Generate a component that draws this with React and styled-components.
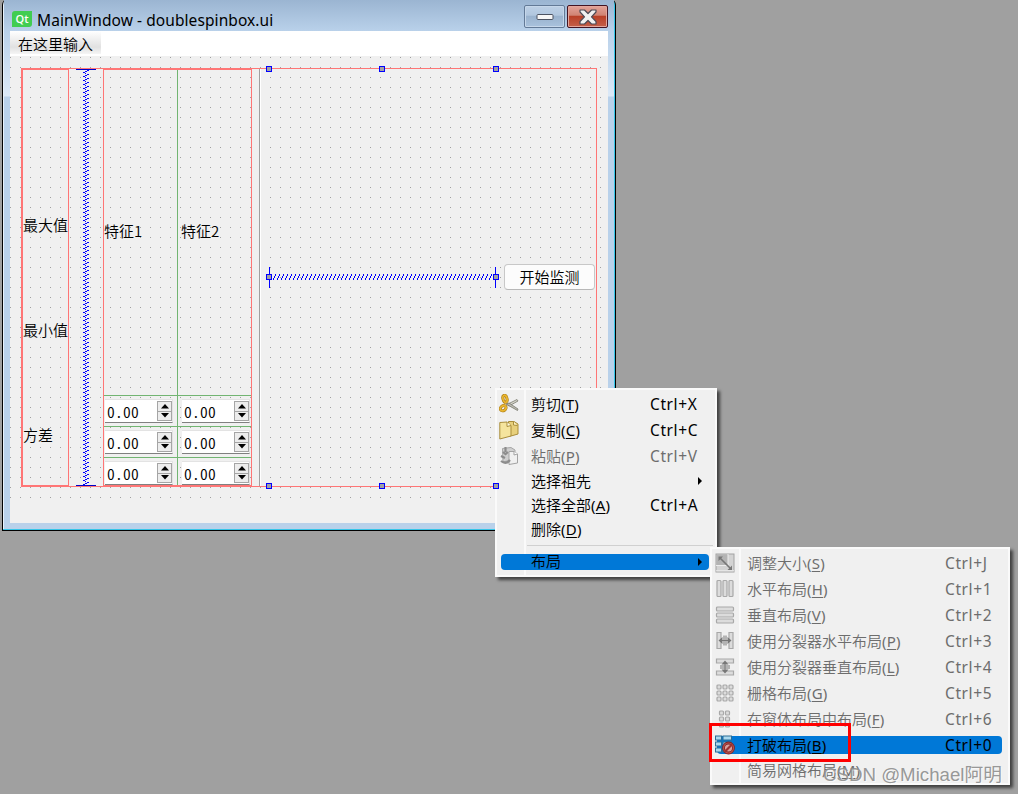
import styled, { createGlobalStyle } from 'styled-components';

const uiFont = '"Noto Sans", "Noto Sans CJK SC", sans-serif';
const formFont = '"Noto Sans CJK SC", sans-serif';

const editItems = [
    { label: '剪切', mark: 'T', keys: 'Ctrl+X', icon: 'cut' },
    { label: '复制', mark: 'C', keys: 'Ctrl+C', icon: 'copy' },
    { label: '粘贴', mark: 'P', keys: 'Ctrl+V', icon: 'paste', disabled: true },
    { label: '选择祖先', height: 24, arrow: true },
    { label: '选择全部', mark: 'A', keys: 'Ctrl+A', height: 24 },
    { label: '删除', mark: 'D', height: 24 },
];

const layoutItems = [
    { label: '调整大小', mark: 'S', keys: 'Ctrl+J', icon: 'resize', disabled: true },
    { label: '水平布局', mark: 'H', keys: 'Ctrl+1', icon: 'horizontal', disabled: true },
    { label: '垂直布局', mark: 'V', keys: 'Ctrl+2', icon: 'vertical', disabled: true },
    { label: '使用分裂器水平布局', mark: 'P', keys: 'Ctrl+3', icon: 'splitH', disabled: true },
    { label: '使用分裂器垂直布局', mark: 'L', keys: 'Ctrl+4', icon: 'splitV', disabled: true },
    { label: '栅格布局', mark: 'G', keys: 'Ctrl+5', icon: 'grid', disabled: true },
    { label: '在窗体布局中布局', mark: 'F', keys: 'Ctrl+6', icon: 'form', disabled: true },
    { label: '打破布局', mark: 'B', keys: 'Ctrl+0', icon: 'breakLayout', active: true },
    { label: '简易网格布局', mark: 'M', disabled: true, height: 24 },
];

const bar = { fill: '#dcdcdc', stroke: '#a8a8a8', strokeWidth: 1.2 };

const icons = {
    cut: (
        <>
            <path d="M8 10.5L18 5.5L19 7L10 12Z" fill="#d6d6cc" stroke="#77776c" strokeWidth=".8" />
            <path d="M7 10L10 9L19 15L18.5 16.5Z" fill="#bcbcb2" stroke="#77776c" strokeWidth=".8" />
            <ellipse cx="6" cy="4.8" rx="2" ry="3.6" transform="rotate(-15 6 4.8)" fill="none" stroke="#a97b13" strokeWidth="3" />
            <ellipse cx="6" cy="4.8" rx="2" ry="3.6" transform="rotate(-15 6 4.8)" fill="none" stroke="#e9b52f" strokeWidth="1.8" />
            <ellipse cx="4.2" cy="14.2" rx="3" ry="2.4" transform="rotate(-35 4.2 14.2)" fill="none" stroke="#a97b13" strokeWidth="3" />
            <ellipse cx="4.2" cy="14.2" rx="3" ry="2.4" transform="rotate(-35 4.2 14.2)" fill="none" stroke="#e9b52f" strokeWidth="1.8" />
        </>
    ),
    copy: (
        <>
            <path d="M9.5 1.5H15L19 4V14L12 16H9.5Z" fill="#e7cf7b" stroke="#a98d3b" />
            <path d="M14.5 1.5V5L18.5 5.5" fill="#fff5c8" stroke="#a98d3b" />
            <path d="M.8 2.5L8 2L12 5.5V16L.8 19Z" fill="#f5e49d" stroke="#a98d3b" />
            <path d="M8 2V6.5L12 5.5" fill="#fffbe0" stroke="#a98d3b" />
        </>
    ),
    paste: (
        <>
            <path d="M3.5 2.5L12 1.5L16 4V13L4 16Z" fill="#cfcfcf" stroke="#a6a6a6" />
            <path d="M10 5.5H15L18.5 8V17L10 18.5Z" fill="#f0f0f0" stroke="#a3a3a3" />
            <path d="M15 5.5V9L18.5 8" fill="#fff" stroke="#a3a3a3" />
            <path d="M6.5 1V6M4 6L6.5 8L9 6M2 10L6 12M2 15Q7 19 11 14" fill="none" stroke="#8c8c8c" strokeWidth="2.2" />
        </>
    ),
    resize: (
        <>
            <rect x="1" y="1" width="18" height="18" fill="#d3d3d3" stroke="#a2a2a2" />
            <rect x="1.5" y="1.5" width="11.5" height="10.5" fill="#b4b4b4" />
            <path d="M1 12.5H13V1M1 17.8H19" stroke="#ededed" fill="none" />
            <path d="M5 5L15 15" stroke="#777" strokeWidth="1.6" />
            <path d="M3.5 3.5H8L3.5 8ZM17 17H12.5L17 12.5Z" fill="#777" />
        </>
    ),
    horizontal: [2, 8, 14].map((x) => <rect key={x} x={x} y="1.5" width="4" height="16" rx="1" {...bar} />),
    vertical: [2, 8, 14].map((y) => <rect key={y} x="1.5" y={y} width="17" height="4" rx="1" {...bar} />),
    splitH: (
        <>
            <path d="M2 1.5H6V17.5H2ZM14 1.5H18V17.5H14Z" {...bar} />
            <path d="M9 4.5V14.5M11 4.5V14.5M5 9.5H15" stroke="#777" strokeWidth="1" />
            <path d="M3.5 9.5L7.5 6V13ZM16.5 9.5L12.5 6V13Z" fill="#777" />
        </>
    ),
    splitV: (
        <>
            <path d="M1.5 2H18.5V6H1.5ZM1.5 14H18.5V18H1.5Z" {...bar} />
            <path d="M5 9H15M5 11H15M10 5V15" stroke="#777" strokeWidth="1" />
            <path d="M10 3.5L13.5 7.5H6.5ZM10 16.5L13.5 12.5H6.5Z" fill="#777" />
        </>
    ),
    grid: [2, 8, 14].flatMap((y) =>
        [2, 8, 14].map((x) => <rect key={`${x}-${y}`} x={x} y={y} width="4" height="4" rx="1" {...bar} />)
    ),
    form: [2, 8, 14].flatMap((y) =>
        [4.5, 10.5].map((x) => <rect key={`${x}-${y}`} x={x} y={y} width="4" height="4" rx="1" {...bar} />)
    ),
    breakLayout: (
        <>
            {[1, 7, 13].map((y) => (
                <g key={y} fill="#a9d8ee" stroke="#2d6c94">
                    <rect x=".5" y={y} width="6" height="4" />
                    <rect x="8" y={y} width="8.5" height="4" />
                </g>
            ))}
            <circle cx="13.5" cy="13" r="5" fill="#d9a09c" stroke="#7d2426" strokeWidth="2.8" />
            <circle cx="13.5" cy="13" r="5" fill="none" stroke="#b5504c" strokeWidth="1.2" />
            <path d="M9.8 16.7L17.2 9.3" stroke="#9c3030" strokeWidth="2.2" />
        </>
    ),
};

const Item = ({ label, mark, keys, icon, disabled, active, arrow, height = 26 }) => (
    <MenuRow $height={height} $disabled={disabled}>
        {active && <Highlight />}
        <IconCell>
            {icon && (
                <svg width="20" height="20" viewBox="0 0 20 20">
                    {icons[icon]}
                </svg>
            )}
        </IconCell>
        <ItemLabel>
            {label}
            {mark && <Mark>(<u>{mark}</u>)</Mark>}
        </ItemLabel>
        {keys && <Keys>{keys}</Keys>}
        {arrow && <Arrow />}
    </MenuRow>
);

const Arrow = () => (
    <ArrowIcon width="4" height="8" viewBox="0 0 4 8">
        <path d="M0 0L4 4L0 8Z" fill="#000" />
    </ArrowIcon>
);

const Spin = () => (
    <SpinBox>
        <SpinValue>0.00</SpinValue>
        <SpinButtons>
            <SpinButton>
                <svg width="8" height="5" viewBox="0 0 8 5"><path d="M4 0L8 4.5H0Z" /></svg>
            </SpinButton>
            <SpinButton>
                <svg width="8" height="5" viewBox="0 0 8 5"><path d="M4 4.5L8 0H0Z" /></svg>
            </SpinButton>
        </SpinButtons>
    </SpinBox>
);

const VerticalSpacer = () => (
    <svg width="20" height="417" viewBox="0 0 20 417" shapeRendering="crispEdges">
        <defs>
            <pattern id="coilV" x="7" y="0" width="6" height="4" patternUnits="userSpaceOnUse">
                <path d="M4 1h2v1h-2zM2 2h2v1h-2zM0 3h2v1h-2zM2 0h1v1h-1z" fill="#0000ff" />
            </pattern>
        </defs>
        <rect x="7" y="1" width="6" height="415" fill="url(#coilV)" />
        <path d="M0 0h20v1H0zM0 416h20v1H0z" fill="#0000c8" />
    </svg>
);

const HorizontalSpacer = () => (
    <svg width="227" height="21" viewBox="0 0 227 21" shapeRendering="crispEdges">
        <defs>
            <pattern id="coilH" x="0" y="7" width="4" height="6" patternUnits="userSpaceOnUse">
                <path d="M2 0h1v2h-1zM1 2h1v2h-1zM0 4h1v2h-1z" fill="#0000ff" />
            </pattern>
        </defs>
        <rect x="1" y="7" width="225" height="6" fill="url(#coilH)" />
        <path d="M0 0h1v21H0zM226 0h1v21h-1z" fill="#0000ff" />
    </svg>
);

const handles = [
    [256, 10], [369, 10], [483, 10],
    [256, 218], [483, 218],
    [256, 427], [369, 427], [483, 427],
];

const App = () => (
    <Desktop>
        <GlobalStyle />
        <Window>
            <TitleBar>
                <QtLogo>Qt</QtLogo>
                <Title>MainWindow - doublespinbox.ui</Title>
                <WinButton>
                    <svg width="18" height="8" viewBox="0 0 18 8">
                        <rect x="1" y="1.5" width="16" height="5" rx="1" fill="#f6f6f6" stroke="#4c5362" />
                    </svg>
                </WinButton>
                <WinButton $close>
                    <svg width="20" height="16" viewBox="0 0 20 16">
                        <path
                            d="M2 1H6.5L10 4.5L13.5 1H18V3L13.5 7.8L18 12.5V15H13.5L10 11.5L6.5 15H2V12.5L6.5 7.8L2 3Z"
                            fill="#f1f1f1"
                            stroke="#4d4a55"
                            strokeWidth="1.2"
                            strokeLinejoin="round"
                        />
                    </svg>
                </WinButton>
            </TitleBar>
            <MenuBar>
                <MenuHint>在这里输入</MenuHint>
            </MenuBar>
            <Canvas>
                <FormLayout>
                    <LabelColumn>
                        <RowLabel>最大值</RowLabel>
                        <RowLabel>最小值</RowLabel>
                        <RowLabel>方差</RowLabel>
                    </LabelColumn>
                    <SpacerColumn>
                        <VerticalSpacer />
                    </SpacerColumn>
                    <FeatureGrid>
                        <Cell>特征1</Cell>
                        <Cell $right>特征2</Cell>
                        {[0, 1, 2].map((row) => [
                            <SpinCell key={`l${row}`}><Spin /></SpinCell>,
                            <SpinCell key={`r${row}`} $right><Spin /></SpinCell>,
                        ])}
                    </FeatureGrid>
                    <Divider />
                    <ActionRow>
                        <HorizontalSpacer />
                        <StartButton>开始监测</StartButton>
                    </ActionRow>
                </FormLayout>
                {handles.map(([x, y]) => (
                    <Handle key={`${x}-${y}`} $x={x} $y={y} />
                ))}
            </Canvas>
        </Window>

        <EditMenu>
            {editItems.map((item) => (
                <Item key={item.label} {...item} />
            ))}
            <Separator />
            <SubmenuRow>
                <span>布局</span>
                <Arrow />
            </SubmenuRow>
        </EditMenu>

        <LayoutMenu>
            {layoutItems.map((item) => (
                <Item key={item.label} {...item} />
            ))}
        </LayoutMenu>

        <RedFrame />
        <Watermark>CSDN @Michael阿明</Watermark>
    </Desktop>
);

export default App;

const GlobalStyle = createGlobalStyle`
    * {
        box-sizing: border-box;
    }
    body {
        margin: 0;
        background: #a0a0a0;
    }
    svg {
        display: block;
        flex: none;
    }
`;

const Desktop = styled.div`
    position: relative;
    width: 1018px;
    height: 794px;
    overflow: hidden;
    background: #a0a0a0;
    font-family: ${uiFont};
    font-size: 15px;
    font-weight: 350;
    color: #000;
`;

const Window = styled.div`
    position: absolute;
    left: 2px;
    top: -1px;
    width: 614px;
    height: 532px;
    padding: 0 7px 7px 7px;
    border: 1px solid #000;
    border-top: none;
    border-radius: 6px 6px 0 0;
    background:
        linear-gradient(#35c5e8, #35c5e8) right top / 1px 100% no-repeat,
        linear-gradient(#35c5e8, #35c5e8) left bottom / 100% 1px no-repeat,
        linear-gradient(#e8f2fb, #e8f2fb) left top / 1px 100% no-repeat,
        linear-gradient(#9ab4d1 0, #b9d1ea 32px, #dce9f7 97px, #b9d1ea 98px);
    display: flex;
    flex-direction: column;
`;

const TitleBar = styled.div`
    height: 32px;
    margin: 0 -6px;
    padding: 6px 6px 0 8px;
    flex: none;
    display: flex;
    align-items: flex-start;
    background: linear-gradient(#9ab4d1, #b9d1ea);
`;

const QtLogo = styled.div`
    width: 20px;
    height: 16px;
    margin-top: 6px;
    border-radius: 3px 0 3px 0;
    background: #41cd52;
    color: #fff;
    font: 600 11px/15px "Open Sans", sans-serif;
    text-align: center;
`;

const Title = styled.div`
    flex: 1;
    margin: 3px 0 0 5px;
    line-height: 24px;
    font-size: 15.5px;
    font-weight: 400;
    letter-spacing: 0.08px;
    white-space: nowrap;
`;

const WinButton = styled.div`
    width: 41px;
    height: 23px;
    margin-left: 2px;
    border: 1px solid ${({ $close }) => ($close ? '#431422' : '#637a97')};
    border-radius: 2px;
    box-shadow: inset 0 0 0 1px ${({ $close }) => ($close ? '#e3a69c' : '#c6d7ea')};
    background: ${({ $close }) =>
        $close
            ? 'linear-gradient(#e3a399 0, #d08372 45%, #b83e25 46%, #c4604a 100%)'
            : 'linear-gradient(#bdd0e6 0, #b0c6de 45%, #98b1cd 46%, #a9c2dd 100%)'};
    display: flex;
    align-items: center;
    justify-content: center;
`;

const MenuBar = styled.div`
    height: 25px;
    flex: none;
    background: #fff;
`;

const MenuHint = styled.div`
    width: 91px;
    height: 23px;
    padding-left: 8px;
    line-height: 26px;
    background: linear-gradient(#fff, #e1e1e1 70%, #f5f5f5);
`;

/* design surface with one grid dot every 10px */
const Canvas = styled.div`
    position: relative;
    flex: 1;
    padding: 12px 11px;
    background: conic-gradient(at 1px 1px, #f0f0f0 75%, #a0a0a0 0) 0 1px / 10px 10px;
    font-family: ${formFont};
    font-weight: 350;

    &::after {
        content: '';
        position: absolute;
        left: 0;
        right: 0;
        bottom: 0;
        height: 24px;
        background: #f0f0f0;
    }
`;

const FormLayout = styled.div`
    width: 576px;
    height: 419px;
    border: 1px solid #ff7676;
    display: flex;
`;

const LabelColumn = styled.div`
    width: 47px;
    border: 1px solid #ff7676;
    padding-top: 102px;
`;

const RowLabel = styled.div`
    height: 105px;
    line-height: 105px;
    white-space: nowrap;
`;

const SpacerColumn = styled.div`
    width: 34px;
    padding-left: 7px;
`;

const FeatureGrid = styled.div`
    width: 149px;
    border: 1px solid #ff7676;
    display: grid;
    grid-template-columns: 74px 73px;
    grid-template-rows: 325px 31px 31px 28px;
`;

const Cell = styled.div`
    padding-left: ${({ $right }) => ($right ? '3px' : '0')};
    border-right: ${({ $right }) => ($right ? 'none' : '1px solid #72b572')};
    line-height: 321px;
`;

const SpinCell = styled(Cell)`
    padding-top: 3px;
    padding-left: ${({ $right }) => ($right ? '4px' : '1px')};
    border-top: 1px solid #72b572;
    line-height: 1;
`;

const SpinBox = styled.div`
    width: 68px;
    height: 24px;
    padding: 1px 0 1px 2px;
    background: #fff;
    border-top: 1px solid #e3e3e3;
    border-bottom: 1px solid #808080;
    border-right: 1px solid #e3e3e3;
    display: flex;
    justify-content: space-between;
`;

const SpinValue = styled.span`
    font-size: 15.5px;
    line-height: 20px;
    font-feature-settings: 'hwid';
    letter-spacing: 0.25px;
`;

const SpinButtons = styled.div`
    width: 15px;
    height: 20px;
    border: 1px solid #a5a5a5;
    display: flex;
    flex-direction: column;
`;

const SpinButton = styled.div`
    flex: 1;
    background: #ededed;
    display: flex;
    align-items: center;
    justify-content: center;
    & + & {
        border-top: 1px solid #a5a5a5;
    }
`;

const Divider = styled.div`
    width: 2px;
    margin-left: 7px;
    border-left: 1px solid #a0a0a0;
    background: #fff;
`;

const ActionRow = styled.div`
    display: flex;
    align-items: center;
    padding-left: 8px;
`;

const StartButton = styled.div`
    width: 91px;
    height: 26px;
    margin: -1px 0 0 8px;
    border: 1px solid #c8c8c8;
    border-bottom-color: #b8b8b8;
    border-radius: 4px;
    background: #fcfcfc;
    line-height: 23px;
    text-align: center;
`;

const Handle = styled.div`
    position: absolute;
    left: ${({ $x }) => $x}px;
    top: ${({ $y }) => $y}px;
    z-index: 1;
    width: 6px;
    height: 6px;
    border: 1px solid #0000ff;
    background: #a0a0a4;
`;

const Menu = styled.div`
    position: absolute;
    border: 2px solid #fafafa;
    background: linear-gradient(to right, #f0f0f0 27px, #fafafa 27px, #fafafa 29px, #f0f0f0 29px);
    box-shadow: 3px 3px 3px rgba(0, 0, 0, 0.6);
`;

const EditMenu = styled(Menu)`
    left: 495px;
    top: 388px;
    width: 222px;
    height: 189px;
    padding-top: 1px;
`;

const MenuRow = styled.div`
    position: relative;
    height: ${({ $height }) => $height}px;
    display: flex;
    align-items: center;
    color: ${({ $disabled }) => ($disabled ? '#6d6d6d' : '#000')};
    white-space: nowrap;
`;

const IconCell = styled.div`
    position: relative;
    width: 34px;
    padding-left: 2px;
`;

const ItemLabel = styled.div`
    position: relative;
    flex: 1;
    line-height: 22px;
    u {
        text-underline-offset: 2px;
    }
`;

const Mark = styled.span`
    font-weight: 400;
    letter-spacing: 0.2px;
`;

const Keys = styled.div`
    position: relative;
    width: 65px;
    font-size: 15.5px;
    font-weight: 400;
    letter-spacing: 0.6px;
    line-height: 22px;
`;

const LayoutMenu = styled(Menu)`
    left: 710px;
    top: 547px;
    width: 300px;
    height: 238px;
    padding: 1px 0 0 1px;
    ${Keys} {
        width: 63px;
    }
`;

const ArrowIcon = styled.svg`
    margin-right: 13px;
`;

const Highlight = styled.div`
    position: absolute;
    left: 4px;
    right: 6px;
    top: 4px;
    height: 18px;
    border-radius: 4px;
    background: #0078d7;
`;

const Separator = styled.div`
    height: 1px;
    margin: 4px 2px 8px 30px;
    background: #d0d0d0;
`;

const SubmenuRow = styled.div`
    height: 16px;
    margin: 0 6px 0 4px;
    padding-left: 30px;
    border-radius: 4px;
    background: #0078d7;
    display: flex;
    align-items: center;
    justify-content: space-between;
    line-height: 14px;
    span {
        margin-top: -2px;
    }
    ${ArrowIcon} {
        margin-right: 7px;
    }
`;

const RedFrame = styled.div`
    position: absolute;
    left: 709px;
    top: 723px;
    width: 142px;
    height: 39px;
    border: 3px solid #ff0000;
`;

const Watermark = styled.div`
    position: absolute;
    left: 823px;
    top: 762px;
    font: 18.7px/26px "Liberation Sans", "Noto Sans CJK SC", sans-serif;
    color: rgba(140, 140, 140, 0.9);
    text-shadow: 1px 1px 0 rgba(255, 255, 255, 0.6);
    white-space: nowrap;
`;
